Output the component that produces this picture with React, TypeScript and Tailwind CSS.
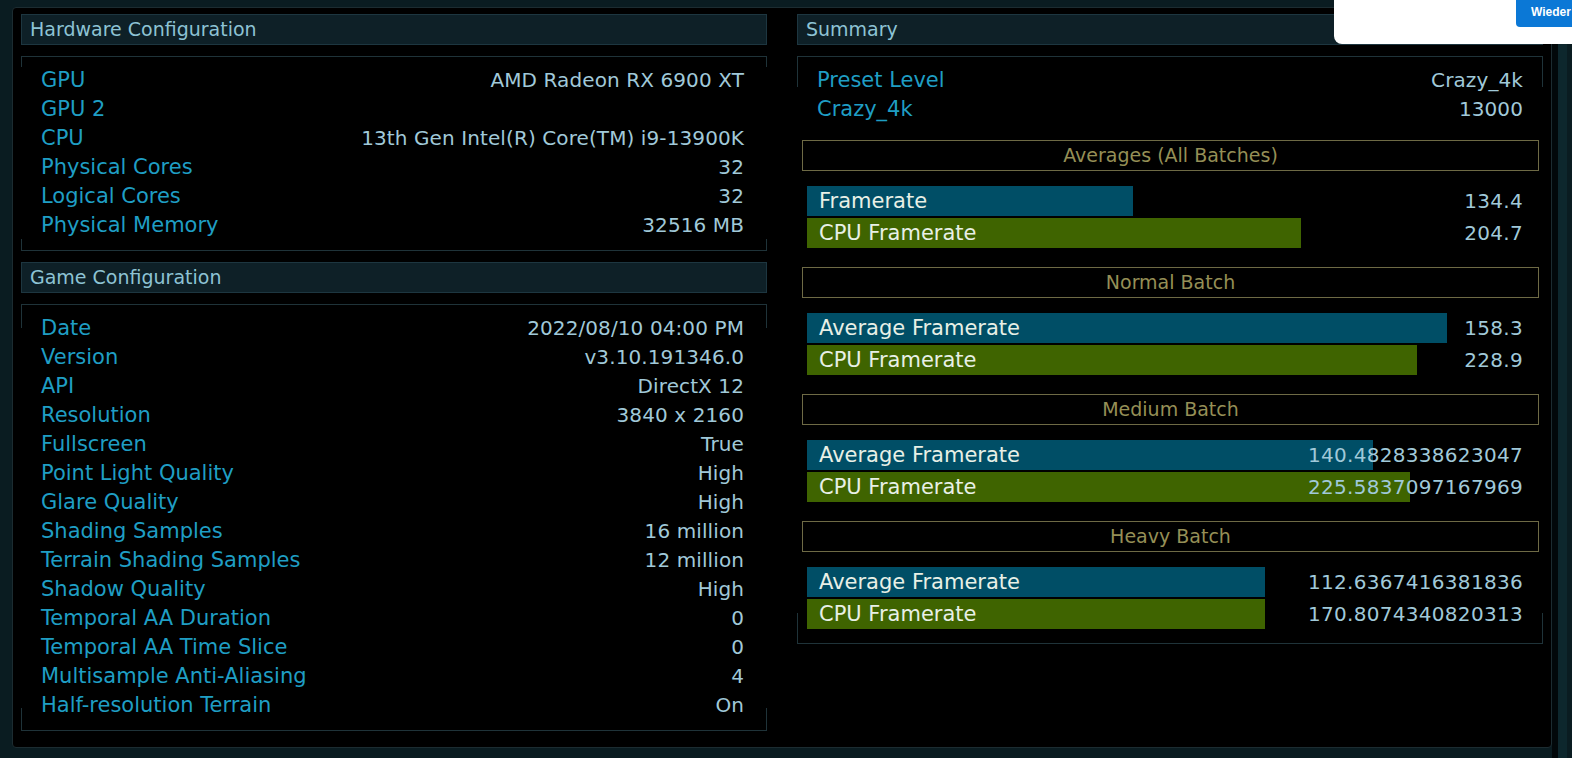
import React from "react";

const hw: [string, string][] = [
  ["GPU", "AMD Radeon RX 6900 XT"],
  ["GPU 2", ""],
  ["CPU", "13th Gen Intel(R) Core(TM) i9-13900K"],
  ["Physical Cores", "32"],
  ["Logical Cores", "32"],
  ["Physical Memory", "32516 MB"],
];

const game: [string, string][] = [
  ["Date", "2022/08/10 04:00 PM"],
  ["Version", "v3.10.191346.0"],
  ["API", "DirectX 12"],
  ["Resolution", "3840 x 2160"],
  ["Fullscreen", "True"],
  ["Point Light Quality", "High"],
  ["Glare Quality", "High"],
  ["Shading Samples", "16 million"],
  ["Terrain Shading Samples", "12 million"],
  ["Shadow Quality", "High"],
  ["Temporal AA Duration", "0"],
  ["Temporal AA Time Slice", "0"],
  ["Multisample Anti-Aliasing", "4"],
  ["Half-resolution Terrain", "On"],
];

type Batch = {
  title: string;
  rows: { label: string; value: string; width: number; kind: "blue" | "green" }[];
};

const batches: Batch[] = [
  {
    title: "Averages (All Batches)",
    rows: [
      { label: "Framerate", value: "134.4", width: 326, kind: "blue" },
      { label: "CPU Framerate", value: "204.7", width: 494, kind: "green" },
    ],
  },
  {
    title: "Normal Batch",
    rows: [
      { label: "Average Framerate", value: "158.3", width: 640, kind: "blue" },
      { label: "CPU Framerate", value: "228.9", width: 610, kind: "green" },
    ],
  },
  {
    title: "Medium Batch",
    rows: [
      { label: "Average Framerate", value: "140.4828338623047", width: 566, kind: "blue" },
      { label: "CPU Framerate", value: "225.5837097167969", width: 603, kind: "green" },
    ],
  },
  {
    title: "Heavy Batch",
    rows: [
      { label: "Average Framerate", value: "112.6367416381836", width: 458, kind: "blue" },
      { label: "CPU Framerate", value: "170.8074340820313", width: 458, kind: "green" },
    ],
  },
];

function Header({ title }: { title: string }) {
  return (
    <div className="h-[31px] bg-[#0e2027] border border-[#1d3640] flex items-center pl-[8px] text-[19px] text-[#8dc3d4]">
      {title}
    </div>
  );
}

function Tick({ pos, h }: { pos: string; h: number }) {
  return <span className={`absolute w-px bg-[#1f3339] ${pos}`} style={{ height: h }} />;
}

function Box({
  children,
  top,
  bottom,
  className = "",
}: {
  children: React.ReactNode;
  top: number;
  bottom: number;
  className?: string;
}) {
  return (
    <div className={`relative border-t border-b border-[#1f3339] ${className}`}>
      <Tick pos="left-0 top-0" h={top} />
      <Tick pos="right-0 top-0" h={top} />
      <Tick pos="left-0 bottom-0" h={bottom} />
      <Tick pos="right-0 bottom-0" h={bottom} />
      {children}
    </div>
  );
}

function Row({ label, value }: { label: string; value: string }) {
  return (
    <div className="flex justify-between items-center h-[29px] leading-[29px]">
      <span className="text-[21px] text-[#1f9ec4]">{label}</span>
      <span className="text-[20px] text-[#a0c9d9] tracking-[0.1px]">{value}</span>
    </div>
  );
}

export default function App() {
  return (
    <div
      className="relative w-[1572px] h-[758px] bg-[#0a1c21] flex overflow-hidden"
      style={{ fontFamily: '"DejaVu Sans", "Liberation Sans", sans-serif' }}
    >
      <div className="mt-[7px] ml-[12px] w-[1540px] h-[741px] bg-black border border-[#1c2c31] rounded-[4px] flex gap-[30px] pl-[8px] pt-[6px]">
        {/* Left column */}
        <div className="w-[746px] flex flex-col">
          <Header title="Hardware Configuration" />
          <Box top={10} bottom={11} className="mt-[11px] pt-[9px] pb-[10px] pl-[20px] pr-[23px]">
            {hw.map(([l, v]) => (
              <Row key={l} label={l} value={v} />
            ))}
          </Box>
          <div className="mt-[11px]">
            <Header title="Game Configuration" />
          </div>
          <Box top={23} bottom={22} className="mt-[11px] pt-[9px] pb-[10px] pl-[20px] pr-[23px]">
            {game.map(([l, v]) => (
              <Row key={l} label={l} value={v} />
            ))}
          </Box>
        </div>

        {/* Right column */}
        <div className="w-[746px] flex flex-col">
          <Header title="Summary" />
          <Box top={30} bottom={30} className="mt-[11px] pt-[9px] pb-[14px]">
            <div className="pl-[20px] pr-[20px]">
              <Row label="Preset Level" value="Crazy_4k" />
              <Row label="Crazy_4k" value="13000" />
            </div>
            <div className="pl-[5px] pr-[4px] flex flex-col">
              {batches.map((b, i) => (
                <div key={b.title} className={i === 0 ? "mt-[16px]" : "mt-[19px]"}>
                  <div className="h-[31px] border border-[#6e6a45] flex items-center justify-center text-[19px] text-[#958f56]">
                    {b.title}
                  </div>
                  <div className="mt-[15px] pl-[5px] pr-[16px] flex flex-col gap-[2px]">
                    {b.rows.map((r) => (
                      <div key={r.label} className="grid h-[30px]">
                        <div
                          className={`col-start-1 row-start-1 h-[30px] ${
                            r.kind === "blue" ? "bg-[#004e66]" : "bg-[#3f6400]"
                          }`}
                          style={{ width: r.width }}
                        />
                        <div className="col-start-1 row-start-1 flex justify-between items-center pl-[12px] leading-[30px]">
                          <span className="text-[21px] text-[#e8f0e6]">{r.label}</span>
                          <span className="text-[20px] text-[#a0c9d9] tracking-[0.3px]">{r.value}</span>
                        </div>
                      </div>
                    ))}
                  </div>
                </div>
              ))}
            </div>
          </Box>
        </div>
      </div>

      {/* scrollbar strip */}
      <div className="w-[6px] h-full bg-[#02080a]" />
      <div className="w-[9px] h-full bg-[#0d272d]" />
      <div className="w-[5px] h-full bg-[#0a1c21]" />

      {/* popup overlay */}
      <div className="absolute top-0 right-0 w-[238px] h-[44px] bg-white rounded-bl-[8px]">
        <div
          className="absolute top-0 right-0 w-[56px] h-[27px] bg-[#0b78d6] rounded-bl-[4px] pl-[15px] pt-[5px] text-[12px] leading-[14px] font-bold text-white"
          style={{ fontFamily: '"Liberation Sans", sans-serif' }}
        >
          Wieder
        </div>
      </div>
    </div>
  );
}
